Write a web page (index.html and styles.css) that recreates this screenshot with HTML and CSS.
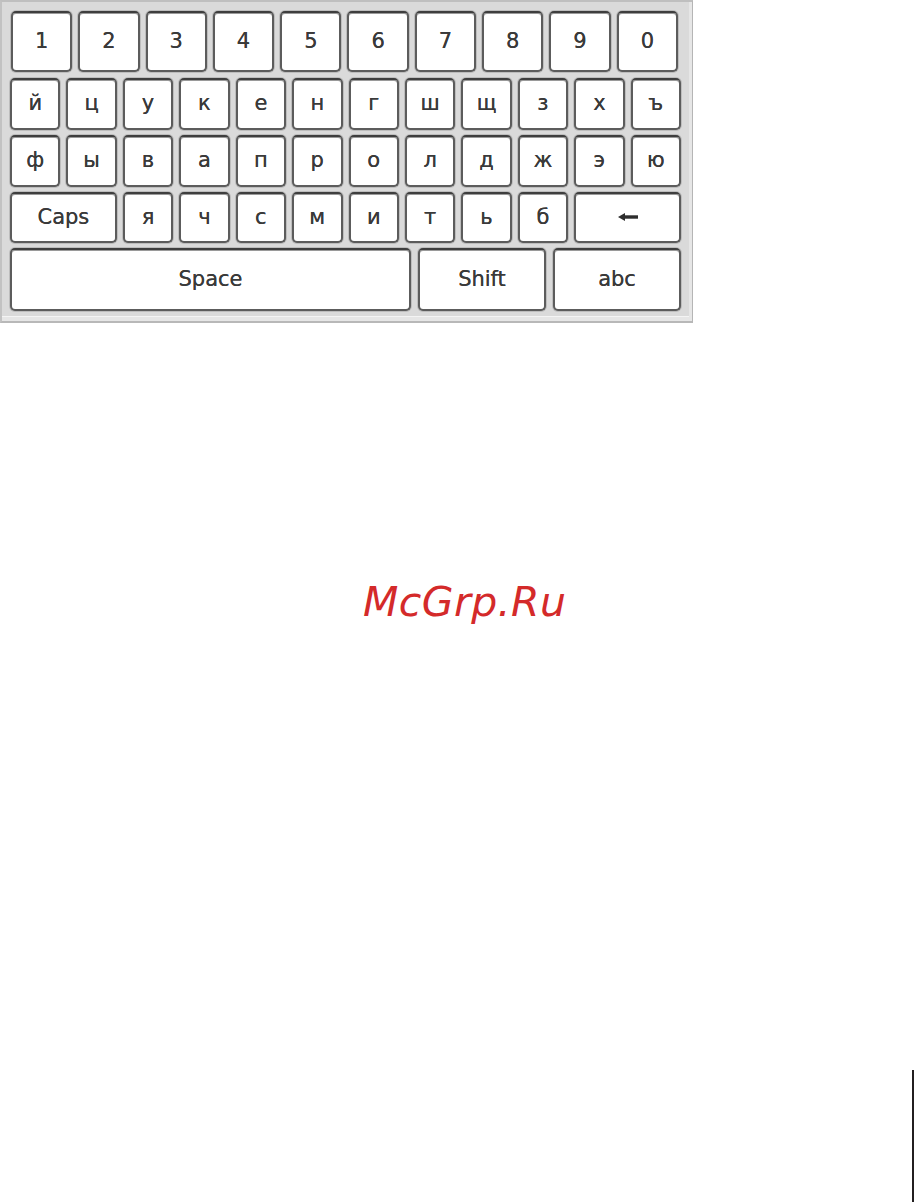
FILE: index.html
```html
<!DOCTYPE html>
<html lang="ru">
<head>
<meta charset="utf-8">
<title>Keyboard</title>
<link rel="stylesheet" href="styles.css">
</head>
<body>
<div class="panel">
  <div class="row row-digits">
    <div class="key">1</div><div class="key">2</div><div class="key">3</div><div class="key">4</div><div class="key">5</div>
    <div class="key">6</div><div class="key">7</div><div class="key">8</div><div class="key">9</div><div class="key">0</div>
  </div>
  <div class="row row-letters">
    <div class="key">й</div><div class="key">ц</div><div class="key">у</div><div class="key">к</div><div class="key">е</div><div class="key">н</div>
    <div class="key">г</div><div class="key">ш</div><div class="key">щ</div><div class="key">з</div><div class="key">х</div><div class="key">ъ</div>
  </div>
  <div class="row row-letters">
    <div class="key">ф</div><div class="key">ы</div><div class="key">в</div><div class="key">а</div><div class="key">п</div><div class="key">р</div>
    <div class="key">о</div><div class="key">л</div><div class="key">д</div><div class="key">ж</div><div class="key">э</div><div class="key">ю</div>
  </div>
  <div class="row row-letters row-four">
    <div class="key wide">Caps</div>
    <div class="key">я</div><div class="key">ч</div><div class="key">с</div><div class="key">м</div><div class="key">и</div>
    <div class="key">т</div><div class="key">ь</div><div class="key">б</div>
    <div class="key wide"><svg class="arrow" width="20" height="8" viewBox="0 0 20 8"><polygon points="0,4 7,0 7,8" /><rect x="6" y="2.3" width="14" height="3.4" /></svg></div>
  </div>
  <div class="row row-bottom">
    <div class="key">Space</div><div class="key">Shift</div><div class="key">abc</div>
  </div>
</div>
<div class="watermark">McGrp.Ru</div>
<div class="edge-bar"></div>
</body>
</html>
```
FILE: styles.css
```css
html, body {
  margin: 0;
  padding: 0;
  background: #ffffff;
}
body {
  width: 914px;
  height: 1202px;
  position: relative;
  overflow: hidden;
  font-family: "DejaVu Sans", "Liberation Sans", sans-serif;
}
.panel {
  box-sizing: border-box;
  width: 693px;
  height: 323px;
  background: #dadada;
  border-top: 2px solid #bfbfbf;
  border-left: 2px solid #c2c2c2;
  border-right: 1px solid #b5b5b5;
  border-bottom: 2px solid #b8b8b8;
  box-shadow: inset -3px -4px 0 #e6e6e6, inset 0 -5px 0 #f4f4f4;
  padding: 9px 0 0 8px;
  display: flex;
  flex-direction: column;
  row-gap: 5px;
}
.row {
  display: grid;
  column-gap: 6px;
}
.row-digits {
  grid-template-columns: repeat(10, 1fr);
  width: 667px;
  height: 61px;
  margin-left: 1px;
  margin-bottom: 1px;
}
.row-letters {
  grid-template-columns: repeat(12, 1fr);
  width: 671px;
  height: 52px;
}
.row-four {
  height: 51px;
}
.row-four .wide {
  grid-column: span 2;
}
.row-bottom {
  grid-template-columns: 401px 128px 128px;
  column-gap: 7px;
  width: 671px;
  height: 63px;
}
.key {
  box-sizing: border-box;
  background: #ffffff;
  border: 2px solid #5c5c5c;
  border-top-color: #3e3e3e;
  border-radius: 5px;
  box-shadow: 0 0 0 1px #bdbdbd, inset 0 1px 0 #9a9a9a;
  display: flex;
  align-items: center;
  justify-content: center;
  color: #3a3a3a;
  font-size: 21px;
  line-height: 1;
  padding-bottom: 1px;
  text-shadow: 0 0 0.6px #3a3a3a;
}
.arrow {
  fill: #2e2e2e;
  display: block;
}
.watermark {
  position: absolute;
  left: 363px;
  top: 578px;
  font-family: "DejaVu Sans", "Liberation Sans", sans-serif;
  font-style: italic;
  font-size: 41px;
  letter-spacing: 0.4px;
  line-height: 1.2;
  color: #d42a2a;
}
.edge-bar {
  position: absolute;
  left: 912px;
  top: 1070px;
  width: 2px;
  height: 132px;
  background: #231f20;
}
```
